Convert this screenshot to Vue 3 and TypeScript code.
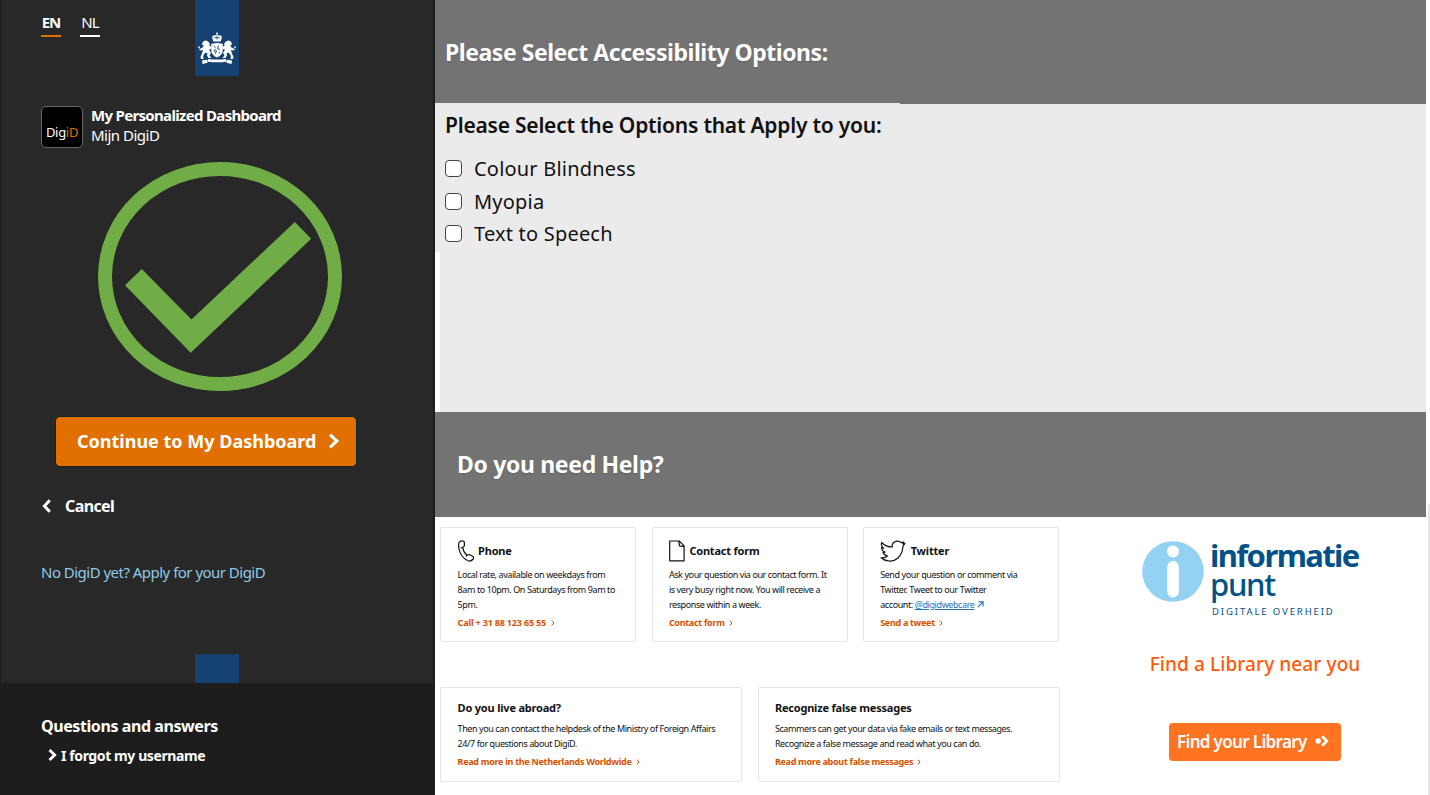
<script setup lang="ts">
interface ContactCard {
  icon: 'phone' | 'form' | 'twitter'
  title: string
  lines: string[]
  handle?: string
  link: string
}
interface InfoCard {
  title: string
  lines: string[]
  link: string
}

const options: string[] = ['Colour Blindness', 'Myopia', 'Text to Speech']

const contacts: ContactCard[] = [
  {
    icon: 'phone',
    title: 'Phone',
    lines: ['Local rate, available on weekdays from', '8am to 10pm. On Saturdays from 9am to', '5pm.'],
    link: 'Call + 31 88 123 65 55',
  },
  {
    icon: 'form',
    title: 'Contact form',
    lines: ['Ask your question via our contact form. It', 'is very busy right now. You will receive a', 'response within a week.'],
    link: 'Contact form',
  },
  {
    icon: 'twitter',
    title: 'Twitter',
    lines: ['Send your question or comment via', 'Twitter. Tweet to our Twitter', 'account: '],
    handle: '@digidwebcare',
    link: 'Send a tweet',
  },
]

const infos: InfoCard[] = [
  {
    title: 'Do you live abroad?',
    lines: ['Then you can contact the helpdesk of the Ministry of Foreign Affairs', '24/7 for questions about DigiD.'],
    link: 'Read more in the Netherlands Worldwide',
  },
  {
    title: 'Recognize false messages',
    lines: ['Scammers can get your data via fake emails or text messages.', 'Recognize a false message and read what you can do.'],
    link: 'Read more about false messages',
  },
]
</script>

<template>
  <div class="page">
    <aside class="side">
      <div class="login">
        <nav class="langs">
          <a class="lang active">EN</a>
          <a class="lang">NL</a>
        </nav>
        <svg class="ribbon" viewBox="0 0 44 76" width="44" height="76">
          <rect width="44" height="76" fill="#154273" />
          <g fill="#fff">
            <circle cx="22" cy="33.6" r="1" />
            <path d="M17 37.2q1-2.6 3.2-1.8L22 34.5l1.8.9q2.2-.8 3.2 1.8l-1.4 4.3h-7.2z" />
            <path d="M16.2 44q5.8-2 11.6 0v6.5q-.3 4.600-5.800 7-5.500-2.400-5.800-7z" />
            <path id="beast" d="M7.500 42.500l1.500-1.500 2-.5 2 1 1.800 2-.3 2 1.800 1.500-.3 2-2 .5 2 3.500-1.500 2.500 2 2.500h-3l-1.500-2.500.5-2-2-1-2 2.500-.5 2.500 1 1.500H6l-.5-2 1.500-3.500 1-3.500-2.500.5-1.500-1 3.500-2 1.500-2-1.800-.5z" />
            <use href="#beast" transform="matrix(-1 0 0 1 44 0)" />
            <path d="M3.300 46.200l1.700.6-.4 1.900-1.300-1zM40.700 46.200l-1.700.6.4 1.900 1.300-1z" />
            <path d="M13 59q9 1.200 18 0v2.800q-9 1-18 0zM7 60.400l5.500-.6v2.900l-5 1.200zM37 60.400l-5.500-.6v2.900l5 1.200z" />
          </g>
          <path d="M18.800 37.700h6.400M22 35.500v4" stroke="#154273" stroke-width=".8" />
          <path d="M18.500 46l2 1.500m3-2l-1 3 2.500 1m-5.500-.5l2 2-1.500 3m4-2l1 1.500m-6-3.500l1 2" stroke="#154273" stroke-width=".9" fill="none" />
        </svg>

        <div class="brand">
          <span class="digid">Dig<b>iD</b></span>
          <div class="brand-text">
            <strong class="brand-title">My Personalized Dashboard</strong>
            <span class="brand-sub">Mijn DigiD</span>
          </div>
        </div>

        <svg class="check" viewBox="0 0 244 230" width="244" height="230">
          <ellipse cx="122" cy="114.500" rx="115" ry="107.500" fill="none" stroke="#70ad47" stroke-width="14" />
          <path d="M27 123.300L43.800 107 93.500 157.500 196.800 60l16.400 16.800L92.700 190.700z" fill="#70ad47" />
        </svg>

        <button class="continue">
          <span>Continue to My Dashboard</span>
          <svg viewBox="0 0 12 16" width="12" height="16"><path d="M2 1.700L8.800 8 2 14.300" fill="none" stroke="#fff" stroke-width="3.200" /></svg>
        </button>

        <a class="cancel">
          <svg viewBox="0 0 10 14" width="10" height="14"><path d="M8.800 1.200L3.400 7l5.400 5.800" fill="none" stroke="#fff" stroke-width="3" /></svg>
          <span>Cancel</span>
        </a>
        <a class="apply">No DigiD yet? Apply for your DigiD</a>
        <span class="ribbon-end"></span>
      </div>

      <footer class="faq">
        <h2>Questions and answers</h2>
        <a>
          <svg viewBox="0 0 9 12" width="9" height="12"><path d="M1.500 1L6.700 6l-5.200 5" fill="none" stroke="#fff" stroke-width="2.800" /></svg>
          <span>I forgot my username</span>
        </a>
      </footer>
    </aside>

    <main class="content">
      <header class="banner first"><h1>Please Select Accessibility Options:</h1></header>
      <section class="options">
        <h2>Please Select the Options that Apply to you:</h2>
        <label v-for="option in options" :key="option" class="option">
          <input type="checkbox" /><span>{{ option }}</span>
        </label>
      </section>
      <header class="banner second"><h1>Do you need Help?</h1></header>

      <section class="help">
        <div class="cards">
          <div class="row contact-row">
            <article v-for="card in contacts" :key="card.title" class="card">
              <div class="card-head">
                <svg v-if="card.icon === 'phone'" class="icon" viewBox="0 0 16 22" width="16" height="22">
                  <path d="M1.200 2.200Q3 .8 4.800 1l1.500.7.100 4.100-1.700 1.700Q5 11.500 9 15.300l2.300-.8 4.200 2.200-.2 2.300q-2.300 2.700-5.300 1.800Q2.300 17.200.800 8 .3 4.200 1.200 2.200z" />
                  <path d="M4.200 7.500l-1.500.4M9 15.300l-.8 1.300" />
                </svg>
                <svg v-else-if="card.icon === 'form'" class="icon" viewBox="0 0 16 22" width="16" height="22">
                  <path d="M.700 1h9.500l4.900 4.900v14.900H.700z M9.700 1l.8 4.800 4.600.8" />
                </svg>
                <svg v-else class="icon" viewBox="0 0 26 22" width="26" height="22">
                  <path d="M1.800 2.500Q6 7 12.300 7 11.700 2.300 16 1.300q3-.8 5.300 1.400L24 2l-1.200 1.800 2.200-.3-2 2.700Q22.500 13.500 18 18q-4 3.500-9 3-5-.4-8-3.200 4 .5 6.500-1.800-3.200-.5-4.500-3.500l2.200-.3Q1.500 10.500 1.600 7.500l2 .6Q.3 5.500 1.800 2.500z" />
                </svg>
                <h3>{{ card.title }}</h3>
              </div>
              <p>
                <span v-for="(line, i) in card.lines" :key="i" class="line">{{ line }}<template v-if="card.handle && i === card.lines.length - 1"><a class="handle">{{ card.handle }}</a><svg class="external" viewBox="0 0 8 8" width="7" height="7"><path d="M1 7l5.800-5.800M1.800 1h5.200v5.200" /></svg></template></span>
              </p>
              <a class="more">{{ card.link }}<svg viewBox="0 0 4 6" width="4" height="6"><path d="M.8.6L3 3 .8 5.400" /></svg></a>
            </article>
          </div>
          <div class="row info-row">
            <article v-for="card in infos" :key="card.title" class="card info">
              <h3>{{ card.title }}</h3>
              <p><span v-for="line in card.lines" :key="line" class="line">{{ line }}</span></p>
              <a class="more">{{ card.link }}<svg viewBox="0 0 4 6" width="4" height="6"><path d="M.8.6L3 3 .8 5.400" /></svg></a>
            </article>
          </div>
        </div>

        <div class="library">
          <div class="logo">
            <svg viewBox="0 0 62 61" width="62" height="61">
              <ellipse cx="31" cy="30.500" rx="30.800" ry="30.300" fill="#93d2f2" />
              <circle cx="31" cy="10.500" r="6" fill="#fff" />
              <rect x="25.300" y="20" width="11.600" height="36.500" rx="5.800" fill="#fff" />
            </svg>
            <div class="logo-text">
              <strong>informatie</strong>
              <span class="punt">punt</span>
              <span class="tagline">DIGITALE OVERHEID</span>
            </div>
          </div>
          <p class="near">Find a Library near you</p>
          <button class="find">
            <span>Find your Library</span>
            <svg viewBox="0 0 14 12" width="14" height="12"><circle cx="3.200" cy="6" r="2.700" fill="#fff" /><path d="M7.200 1.200L11.700 6l-4.500 4.800" fill="none" stroke="#fff" stroke-width="2.800" /></svg>
          </button>
        </div>
      </section>
    </main>
    <div class="rail"></div>
  </div>
</template>

<style>
body { margin: 0; overflow: hidden; background: #fff; }
</style>

<style scoped>
* { box-sizing: border-box; }
h1, h2, h3, p { margin: 0; }
.page { display: flex; position: relative; width: 1430px; height: 795px; overflow: hidden; background: #fff; color: #111; font-family: "Noto Sans", "Open Sans", sans-serif; white-space: nowrap; }
button { font-family: inherit; border: 0; }

.side { display: flex; flex-direction: column; width: 435px; flex: none; background: #1d1d1d; color: #fff; }
.login { position: relative; display: flex; flex-direction: column; align-items: flex-start; height: 684px; margin-right: 2px; padding-left: 40px; background: #282828; border: solid #1b1b1b; border-width: 0 0 1px 1px; }
.langs { display: flex; gap: 19px; margin-top: 12px; }
.lang { width: 20px; height: 25px; border-bottom: 2px solid #fff; font-size: 15px; line-height: 20px; text-align: center; letter-spacing: -1px; }
.lang.active { border-color: #e17000; font-weight: 700; }
.ribbon { position: absolute; left: 194px; top: 0; }
.ribbon-end { position: absolute; left: 194px; bottom: 0; width: 44px; height: 30px; background: #154273; border-top: 1px solid #2a2412; }
.brand { display: flex; gap: 8px; margin-top: 69px; }
.digid { width: 42px; height: 42px; padding-top: 15px; border: 1px solid #666; border-radius: 5px; background: #000; font-size: 13px; line-height: 20px; letter-spacing: -.3px; text-align: center; }
.digid b { color: #e17000; font-weight: 400; }
.brand-text { display: flex; flex-direction: column; height: 40px; margin-top: -1px; font-size: 15px; line-height: 20px; }
.brand-title { letter-spacing: -.68px; }
.brand-sub { letter-spacing: -.5px; }
.check { margin: 14px 0 0 57px; }
.continue { display: flex; align-items: center; gap: 12px; width: 302px; height: 51px; margin: 24px 0 0 14px; padding: 0 0 2px 21px; border: 1px solid #10252c; border-radius: 5px; background: #e17000; color: #fff; font-size: 18px; font-weight: 700; letter-spacing: 0; }
.cancel { display: flex; align-items: center; gap: 14px; height: 24px; margin-top: 27px; font-size: 16px; font-weight: 700; letter-spacing: -.6px; }
.apply { margin-top: 42px; color: #8fcae7; font-size: 15px; line-height: 24px; letter-spacing: -.52px; }
.faq { padding: 30px 0 0 41px; }
.faq h2 { font-size: 16px; line-height: 24px; letter-spacing: -.42px; }
.faq a { display: flex; align-items: center; gap: 4px; height: 24px; margin: 5px 0 0 7px; font-size: 14px; font-weight: 700; letter-spacing: -.4px; }

.content { width: 991px; flex: none; }
.banner { display: flex; align-items: center; background: #737373; color: #fff; }
.banner h1 { margin-top: -1px; font-size: 23px; line-height: 30px; letter-spacing: -.46px; text-shadow: 0 1px 1px #5558; }
.first { height: 104px; padding-left: 10px; }
.second { height: 105px; padding-left: 22px; }
.second h1 { letter-spacing: -.34px; }
.options { position: relative; height: 308px; padding: 7px 0 0 10px; background: #ebebeb; }
.options::before { content: ""; position: absolute; left: 0; top: -1px; width: 465px; height: 1px; background: #ebebeb; }
.options::after { content: ""; position: absolute; left: 0; bottom: 0; width: 5px; height: 160px; background: #fff; }
.options h2 { height: 41.500px; font-size: 21px; font-weight: 600; line-height: 29px; letter-spacing: -.22px; }
.option { display: flex; align-items: center; gap: 12px; height: 32.500px; font-size: 20px; letter-spacing: .2px; }
.option input { appearance: none; width: 17px; height: 17px; margin: 0; border: 1.500px solid #444; border-radius: 4px; background: #fff; }

.help { display: flex; height: 278px; }
.cards { width: 625px; padding: 10px 0 0 5.400px; }
.row { display: flex; gap: 15.300px; }
.info-row { margin-top: 45px; }
.card { width: 196px; height: 115px; flex: none; padding: 11px 0 0 16.200px; border: 1px solid #e4e4e4; border-radius: 2px; }
.card-head { display: flex; align-items: center; gap: 4.500px; height: 24px; }
.icon { fill: none; stroke: #111; stroke-width: 1.200; stroke-linejoin: round; }
.card h3 { font-size: 11px; line-height: 20px; letter-spacing: -.2px; }
.card p { margin-top: 4px; font-size: 9px; line-height: 15px; letter-spacing: -.41px; }
.line { display: block; }
.handle { color: #2470b8; text-decoration: underline; }
.external { margin-left: 3px; fill: none; stroke: #2470b8; stroke-width: 1.200; }
.more { display: flex; align-items: center; gap: 5px; height: 15px; margin-top: 3px; color: #d65200; font-size: 9px; font-weight: 700; letter-spacing: -.18px; }
.more svg { fill: none; stroke: #d65200; }
.contact-row .card:nth-child(n + 2) .more { gap: 4px; letter-spacing: -.3px; }
.info { width: 302px; height: 95px; padding-top: 10px; }
.info p { margin-top: 3px; }
.info .more { gap: 4px; letter-spacing: -.3px; }

.library { display: flex; flex-direction: column; align-items: center; width: 366px; padding: 24px 0 0 16px; }
.logo { display: flex; gap: 6px; width: 224px; height: 82px; margin-left: 6px; }
.logo svg { flex: none; }
.logo-text { display: flex; flex-direction: column; color: #015189; }
.logo-text strong { height: 29px; font-size: 31px; line-height: 28px; letter-spacing: -1.600px; }
.punt { height: 33px; font-size: 31px; font-weight: 500; line-height: 29px; letter-spacing: -1.300px; }
.tagline { margin-left: 2px; font-size: 9.500px; line-height: 18px; letter-spacing: 1.900px; }
.near { margin: 26px 0 0 8px; color: #ff5a0a; font-size: 19px; font-weight: 500; line-height: 30px; letter-spacing: .1px; }
.find { display: flex; align-items: center; gap: 8px; width: 172px; height: 38px; margin: 44px 0 0 8px; padding: 0 0 2px 8px; border-radius: 4px; background: #ff7420; color: #fff; font-size: 17px; font-weight: 600; letter-spacing: -.65px; }
.rail { position: absolute; right: 0; top: 504px; width: 2px; height: 291px; background: #e5e5e5; }
</style>
